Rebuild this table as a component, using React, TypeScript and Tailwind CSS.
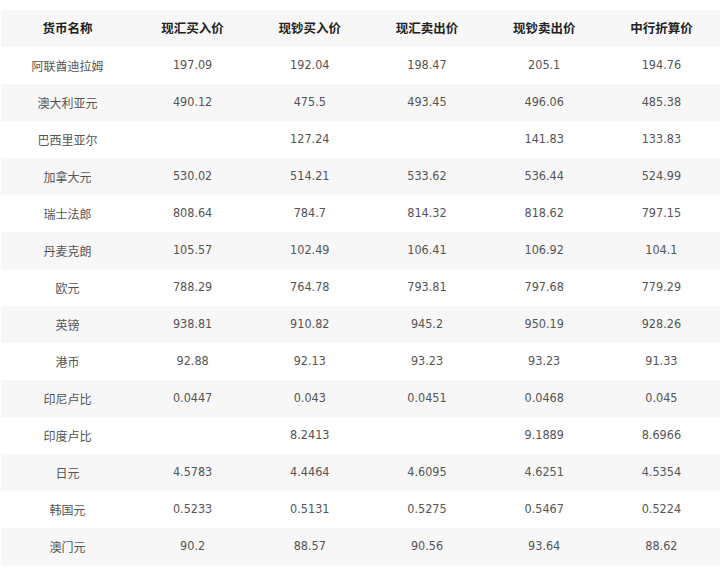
import React from "react";

const headers = ["货币名称", "现汇买入价", "现钞买入价", "现汇卖出价", "现钞卖出价", "中行折算价"];

const rows: string[][] = [
  ["阿联酋迪拉姆", "197.09", "192.04", "198.47", "205.1", "194.76"],
  ["澳大利亚元", "490.12", "475.5", "493.45", "496.06", "485.38"],
  ["巴西里亚尔", "", "127.24", "", "141.83", "133.83"],
  ["加拿大元", "530.02", "514.21", "533.62", "536.44", "524.99"],
  ["瑞士法郎", "808.64", "784.7", "814.32", "818.62", "797.15"],
  ["丹麦克朗", "105.57", "102.49", "106.41", "106.92", "104.1"],
  ["欧元", "788.29", "764.78", "793.81", "797.68", "779.29"],
  ["英镑", "938.81", "910.82", "945.2", "950.19", "928.26"],
  ["港币", "92.88", "92.13", "93.23", "93.23", "91.33"],
  ["印尼卢比", "0.0447", "0.043", "0.0451", "0.0468", "0.045"],
  ["印度卢比", "", "8.2413", "", "9.1889", "8.6966"],
  ["日元", "4.5783", "4.4464", "4.6095", "4.6251", "4.5354"],
  ["韩国元", "0.5233", "0.5131", "0.5275", "0.5467", "0.5224"],
  ["澳门元", "90.2", "88.57", "90.56", "93.64", "88.62"],
];

export default function App() {
  return (
    <div className="w-[720px] h-[569px] bg-white pt-[10px] pl-px font-['DejaVu_Sans_Condensed','DejaVu_Sans','Noto_Sans_CJK_SC',sans-serif]">
      <div className="grid grid-cols-[133px_repeat(5,1fr)] bg-[#f7f7f7] h-[37px] items-center text-[12.5px] font-bold text-[#222] font-['Noto_Sans_CJK_SC',sans-serif]">
        {headers.map((h) => (
          <div key={h} className="text-center">
            {h}
          </div>
        ))}
      </div>
      {rows.map((r, i) => (
        <div
          key={r[0]}
          className={
            i % 2 === 1
              ? "grid grid-cols-[133px_repeat(5,1fr)] h-[37px] items-center text-[12.5px] text-[#555] bg-[#f7f7f7]"
              : "grid grid-cols-[133px_repeat(5,1fr)] h-[37px] items-center text-[12.5px] text-[#555] bg-white"
          }
        >
          {r.map((c, j) => (
            <div
              key={j}
              className={
                j === 0
                  ? "text-center text-[12px] font-['Noto_Sans_CJK_SC',sans-serif]"
                  : "text-center"
              }
            >
              {c}
            </div>
          ))}
        </div>
      ))}
    </div>
  );
}
